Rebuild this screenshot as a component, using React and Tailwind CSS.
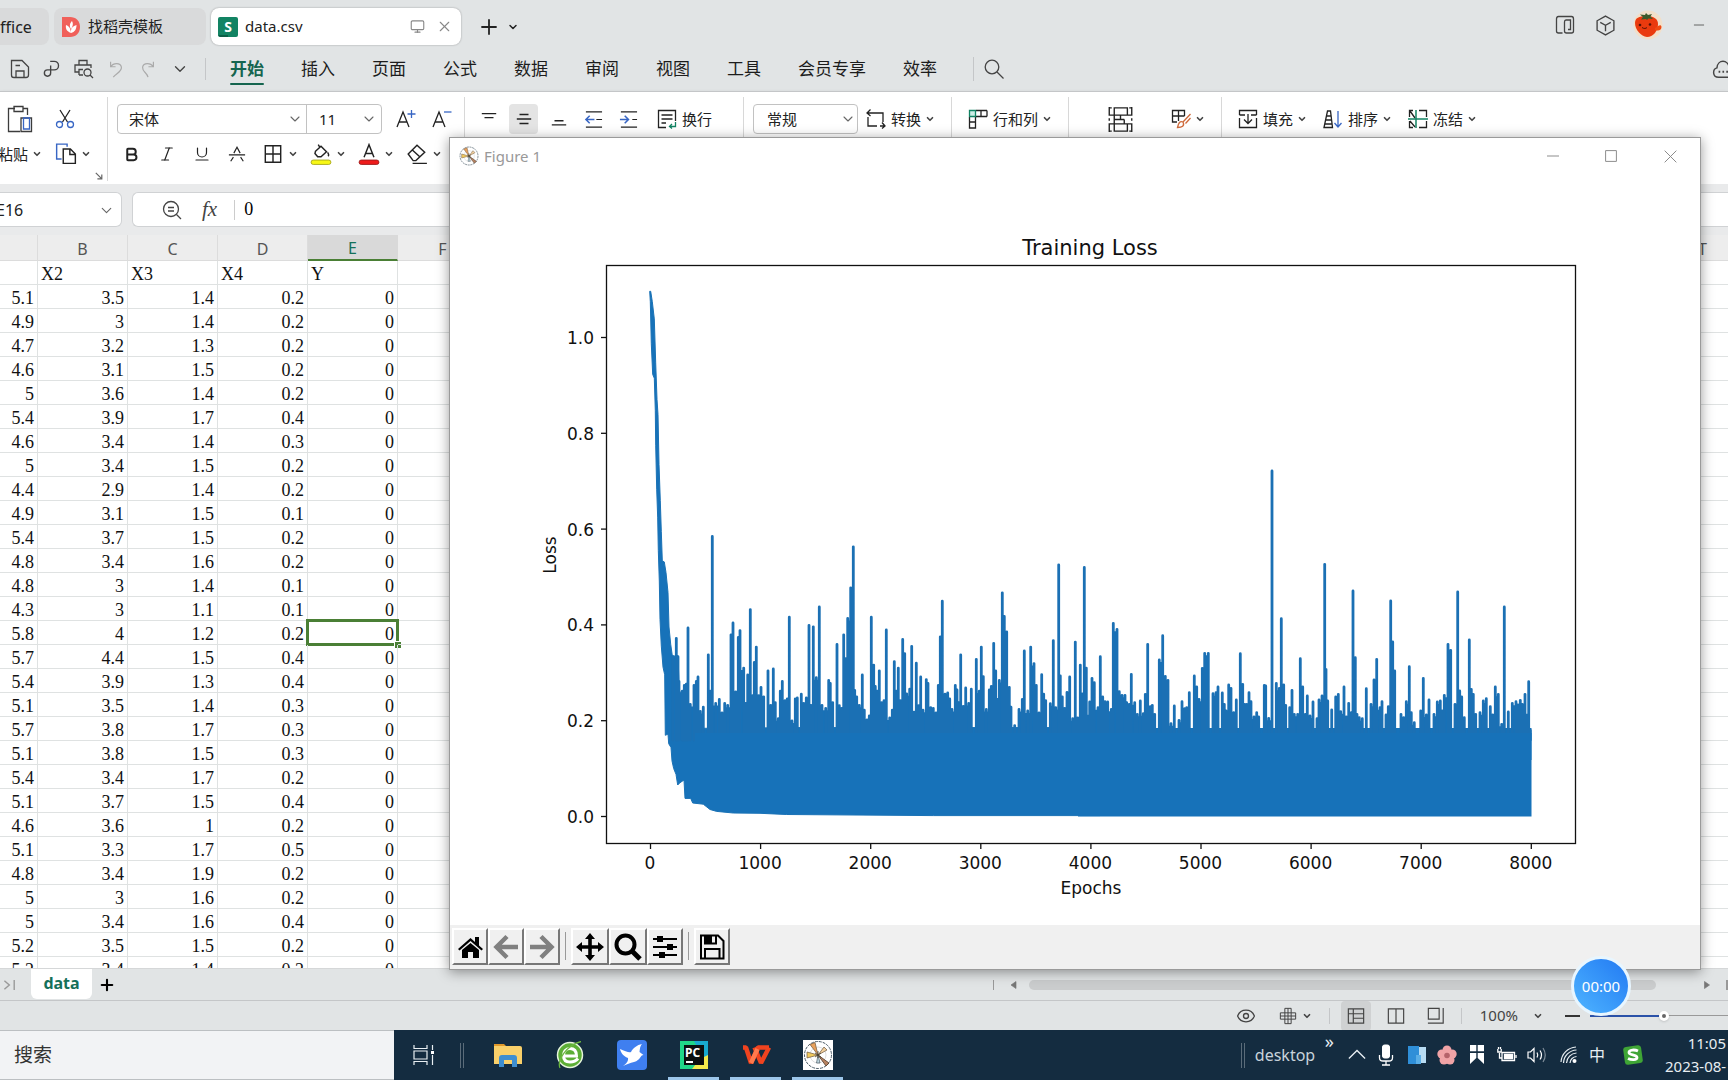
import { ChevronDown, Search, X, Plus, Minus, Monitor, Eye, Bold, Italic, Underline } from 'lucide-react';
import clsx from 'clsx';

const UI_FONT = "font-['Noto_Sans','Noto_Sans_CJK_SC',sans-serif]";

const columns = ['A', 'B', 'C', 'D', 'E', 'F', 'G', 'H', 'I', 'J', 'K', 'L', 'M', 'N', 'O', 'P', 'Q', 'R', 'S', 'T'];

const rows = [
  ['5.1', '3.5', '1.4', '0.2', '0'],
  ['4.9', '3', '1.4', '0.2', '0'],
  ['4.7', '3.2', '1.3', '0.2', '0'],
  ['4.6', '3.1', '1.5', '0.2', '0'],
  ['5', '3.6', '1.4', '0.2', '0'],
  ['5.4', '3.9', '1.7', '0.4', '0'],
  ['4.6', '3.4', '1.4', '0.3', '0'],
  ['5', '3.4', '1.5', '0.2', '0'],
  ['4.4', '2.9', '1.4', '0.2', '0'],
  ['4.9', '3.1', '1.5', '0.1', '0'],
  ['5.4', '3.7', '1.5', '0.2', '0'],
  ['4.8', '3.4', '1.6', '0.2', '0'],
  ['4.8', '3', '1.4', '0.1', '0'],
  ['4.3', '3', '1.1', '0.1', '0'],
  ['5.8', '4', '1.2', '0.2', '0'],
  ['5.7', '4.4', '1.5', '0.4', '0'],
  ['5.4', '3.9', '1.3', '0.4', '0'],
  ['5.1', '3.5', '1.4', '0.3', '0'],
  ['5.7', '3.8', '1.7', '0.3', '0'],
  ['5.1', '3.8', '1.5', '0.3', '0'],
  ['5.4', '3.4', '1.7', '0.2', '0'],
  ['5.1', '3.7', '1.5', '0.4', '0'],
  ['4.6', '3.6', '1', '0.2', '0'],
  ['5.1', '3.3', '1.7', '0.5', '0'],
  ['4.8', '3.4', '1.9', '0.2', '0'],
  ['5', '3', '1.6', '0.2', '0'],
  ['5', '3.4', '1.6', '0.4', '0'],
  ['5.2', '3.5', '1.5', '0.2', '0'],
  ['5.2', '3.4', '1.4', '0.2', '0'],
];

// Loss peaks, x and y in thirds of a pixel. First half of the run.
const earlyPeaks = '218,1060 229,1012 234,1060 237,1125 247,1150 253,1135 259,1132 264,985 271,1185 282,1135 289,1125 294,1113 301,1203 310,1192 325,1055 331,1150 337,746 347,1182 358,1172 366,1207 374,1182 383,1187 393,1003 399,972 407,1152 415,1010 420,992 431,1090 437,1182 443,1108 451,937 458,1162 463,1075 469,1035 476,1162 483,1140 491,1165 504,1097 512,1187 520,1092 526,1180 535,1222 541,1150 547,1125 555,1175 562,1170 568,957 576,1228 586,1170 592,1168 604,1158 611,1182 619,1168 627,978 633,1187 640,982 649,1115 658,930 666,1187 677,1195 686,1122 691,1130 698,1180 711,1028 718,1188 725,1195 731,1003 737,1065 743,960 752,880 760,773 764,1148 770,1165 778,1187 787,1108 793,1200 801,1225 808,1215 814,957 821,1082 826,1138 832,1150 838,1097 845,1180 852,1175 859,990 869,1220 877,1200 883,1073 889,1150 895,1090 901,1175 908,1015 914,1052 920,1157 929,1145 935,1033 942,1205 949,1077 956,1188 962,1113 969,1200 979,1120 984,1130 992,1193 1000,1195 1008,1207 1015,1135 1021,1008 1027,915 1035,1158 1043,1155 1049,1170 1056,1198 1066,1135 1071,1147 1076,1180 1082,1055 1090,1190 1097,1142 1106,1182 1114,1145 1129,1067 1138,1150 1144,1035 1150,1112 1159,1198 1168,1147 1174,1138 1181,1025 1187,1097 1192,1172 1198,1122 1207,893 1213,955 1220,995 1228,1140 1233,1192 1244,1240 1257,1198 1267,1172 1273,1045 1283,1202 1292,1035 1302,1078 1309,1135 1317,1207 1325,1107 1331,1158 1337,1175 1351,1183 1360,1018 1367,1193 1376,820 1381,1110 1387,1165 1394,1195 1401,1153 1409,1113 1418,1222 1426,1022 1433,1220 1441,1082 1447,1157 1453,827 1459,1090';

// Second half of the run.
const latePeaks = '22,825 29,783 36,712 43,725 54,800 61,647 68,768 75,782 83,783 94,805 100,547 111,565 118,752 126,763 135,763 140,785 148,790 154,700 164,785 172,820 181,780 190,818 196,760 203,610 211,797 217,793 224,820 238,657 248,584 256,706 264,718 273,848 283,795 297,838 306,782 314,803 320,800 328,755 343,705 350,738 357,775 367,682 374,637 385,637 399,758 408,755 414,738 427,756 433,790 438,810 446,732 453,742 461,815 469,777 481,638 488,730 494,790 500,790 507,755 513,782 522,828 530,815 536,828 553,733 557,735 566,832 576,90 589,727 598,742 604,533 611,732 617,793 629,800 636,748 643,820 653,820 661,653 668,738 676,820 682,765 690,825 699,783 711,833 717,777 726,765 734,370 738,685 743,780 755,807 767,768 775,760 782,812 792,738 799,828 806,787 814,815 819,450 826,650 831,820 838,830 847,833 859,743 873,790 882,717 890,655 900,800 906,782 918,822 925,797 932,480 938,603 944,690 963,820 971,830 979,782 988,677 994,815 1003,845 1022,810 1030,712 1039,822 1047,777 1062,820 1072,783 1081,780 1087,810 1093,763 1104,610 1112,628 1125,790 1133,453 1139,750 1145,768 1153,830 1168,597 1174,745 1180,760 1187,820 1200,815 1210,780 1219,773 1231,797 1238,822 1246,738 1255,760 1265,850 1273,498 1285,813 1297,787 1308,782 1314,792 1321,778 1327,790 1335,760 1342,822 1346,722 1351,868';

const parse = (text) => text.split(' ').map((pair) => pair.split(',').map(Number));

const peaks = [
  ...parse(earlyPeaks).map(([x, y]) => [600 + x / 3, 250 + y / 2.613]),
  ...parse(latePeaks).map(([x, y]) => [1080 + x / 3, 440 + y / 3]),
];

// The sharp drop at the start and the solid band under the peaks
const descent = [
  [149, 108], [152, 108], [157, 135], [163, 180], [167, 295], [171, 390], [174, 430], [177, 560], [181, 655], [184, 735],
  [187, 812], [193, 815], [198, 843], [204, 895], [207, 985], [212, 1030], [217, 1060], [234, 1062], [238, 1150], [260, 1195],
  [275, 1250], [600, 1248], [1500, 1248], [1500, 1478], [1000, 1478], [560, 1475], [480, 1472], [400, 1471], [350, 1467],
  [330, 1462], [310, 1448], [278, 1445], [272, 1433], [255, 1433], [252, 1385], [240, 1392], [233, 1398], [228, 1370],
  [221, 1355], [216, 1335], [213, 1300], [206, 1290], [204, 1265], [196, 1268], [194, 1110], [189, 1090], [184, 1035],
  [180, 965], [178, 865], [175, 785], [173, 700], [170, 625], [167, 510], [166, 420], [163, 335], [158, 325], [154, 245],
  [151, 135],
].map(([x, y]) => `${(600 + x / 3).toFixed(1)},${(250 + y / 2.613).toFixed(1)}`).join(' ');

const peakPath = peaks.map(([x, y]) => `M${x.toFixed(1)} ${(y + 1).toFixed(1)}V740`).join('');

// Neighbouring peaks run together up to the lower one
const joinPath = peaks.slice(1).map(([x, y], i) => {
  const [px, py] = peaks[i];
  if (x - px > 3.8) return '';
  const top = Math.max(y, py) + 3;
  return `M${px.toFixed(1)} ${top.toFixed(1)}H${x.toFixed(1)}V740H${px.toFixed(1)}Z`;
}).join('');

function Icon({ size = 20, children, className }) {
  return (
    <svg width={size} height={size} viewBox="0 0 20 20" fill="none" stroke="currentColor" strokeWidth="1.3" className={clsx('shrink-0', className)} aria-hidden="true">
      {children}
    </svg>
  );
}

function Caret() {
  return <ChevronDown size={10} strokeWidth={4} className="shrink-0 text-[#444]" />;
}

function Tool({ label, className, children }) {
  return (
    <button type="button" aria-label={label} className={clsx('flex h-[30px] shrink-0 items-center justify-center rounded', className)}>
      {children}
    </button>
  );
}

function TextTool({ text, caret = true, children }) {
  return (
    <button type="button" className="flex h-[30px] shrink-0 items-center whitespace-nowrap">
      {children}
      <span className="ml-[5px]">{text}</span>
      {caret && <span className="ml-1"><Caret /></span>}
    </button>
  );
}

function MplLogo({ size }) {
  return (
    <svg width={size} height={size} viewBox="0 0 30 30" fill="none" aria-hidden="true">
      <circle cx="15" cy="15" r="13.5" fill="#fff" stroke="#4a5a66" strokeWidth="1" strokeDasharray="3 1" />
      <circle cx="15" cy="15" r="8" stroke="#c9c9c9" strokeWidth="0.6" />
      <path d="M15 15L7 4.500L12 2.500Z" fill="#e8a15c" stroke="#6b543c" strokeWidth="0.7" />
      <path d="M15 15L4 12V18Z" fill="#f0c95e" stroke="#6b543c" strokeWidth="0.7" />
      <path d="M15 15L21 7L24 10Z" fill="#f1cf9c" stroke="#6b543c" strokeWidth="0.7" />
      <path d="M15 15L26 23L23 26Z" fill="#b98360" stroke="#4d3929" strokeWidth="0.8" />
      <path d="M15 15L13.500 23H17Z" fill="#bfd8e0" stroke="#4a5a66" strokeWidth="0.7" />
      <path d="M12 13L18 17M15 11V18M12 17L18 13" stroke="#463c2c" strokeWidth="0.8" />
    </svg>
  );
}

function TitleTabs() {
  return (
    <header className="flex h-12 shrink-0 items-center text-[15px] text-[#222]">
      <button type="button" className="mt-[5px] h-[37px] w-[49px] shrink-0 rounded-r-lg bg-[#d9dadb] text-left text-[16px]">ffice</button>
      <button type="button" className="mt-[5px] ml-[5px] flex h-[37px] w-[152px] shrink-0 items-center rounded-lg bg-[#d9dadb] pl-2">
        <svg width="18" height="20" viewBox="0 0 18 20" aria-hidden="true">
          <path d="M0 0H8C14 0 18 4 18 10S14 20 8 20H0Z" fill="#f0605a" />
          <path d="M9 16C4 14 3.500 11 4 8C7 9 8.500 11 9 16ZM9 16C8.500 11 11 9 14.500 8C14.500 12 13 15 9 16ZM9 12C7 9 8 6 10 4C11.500 7 11 9 9 12Z" fill="#fff" />
        </svg>
        <span className="ml-2">找稻壳模板</span>
      </button>
      <div className="mt-[5px] ml-[5px] flex h-[37px] w-[250px] shrink-0 items-center rounded-lg bg-white pr-2 pl-[7px] shadow-[0_0_2px_rgba(0,0,0,0.35)]">
        <svg width="20" height="20" viewBox="0 0 20 20" aria-hidden="true">
          <rect width="20" height="20" rx="2" fill="#128363" />
          <path d="M0 18h10v2H2z" fill="#0b5f47" />
          <text x="10" y="15" textAnchor="middle" fill="#fff" fontSize="14" fontWeight="700" fontFamily="Noto Sans">S</text>
        </svg>
        <span className="ml-[7px] flex-1">data.csv</span>
        <Monitor size={15} strokeWidth={1.8} className="mr-[11px] text-[#888]" />
        <button type="button" aria-label="关闭"><X size={17} strokeWidth={1.6} className="text-[#888]" /></button>
      </div>
      <button type="button" aria-label="新建" className="mt-[5px] ml-4"><Plus size={24} strokeWidth={1.8} /></button>
      <button type="button" aria-label="更多" className="mt-[5px] ml-[6px]"><ChevronDown size={12} strokeWidth={3} /></button>
      <div className="mt-[2px] ml-auto flex items-center text-[#444]">
        <Icon size={20} className="mr-5">
          <path d="M7.500 18H3.500C2 18 1.500 17.500 1.500 16V4C1.500 2.500 2 1.500 3.500 1.500H16.500C18 1.500 18.500 2.500 18.500 4V16C18.500 17.500 18 18 16.500 18H11.500C10 18 9.500 17.500 9.500 16V7C9.500 5.500 10 5 11 5H15.500V14.500H13" />
        </Icon>
        <Icon size={21} className="mr-[17px]">
          <path d="M10 1L18 5.500V14.500L10 19L2 14.500V5.500ZM5 7L10 9.800L15 7M10 10V15.500" />
        </Icon>
        <svg width="30" height="30" viewBox="0 0 30 30" aria-hidden="true">
          <circle cx="15" cy="15" r="14.500" fill="#f2dfc9" />
          <path d="M2 13C2 8 6 6 13 6C21 6 25 9 25 14C25 21 20 27 14 27C8 26 2 20 2 13Z" fill="#ea3a0e" />
          <path d="M22 18C26 15 28 14 28.500 17C28 21 25 21 22 20Z" fill="#f04a12" />
          <path d="M13 9L8 9.500L10 7L7 4.500L12 5L13 3L15 5L19 4L17.500 6.500L20 9L15.500 8.500L14 10Z" fill="#3c5a2a" />
          <circle cx="7" cy="15" r="1.300" fill="#571204" />
          <circle cx="17" cy="14.500" r="1.300" fill="#571204" />
          <path d="M9 17.500C11 19 13 18.500 14 17.500" stroke="#571204" fill="none" />
        </svg>
        <button type="button" aria-label="最小化" className="mr-[21px] ml-7"><Minus size={16} strokeWidth={1.2} /></button>
      </div>
    </header>
  );
}

function MenuBar() {
  const tabs = ['插入', '页面', '公式', '数据', '审阅', '视图', '工具', '会员专享', '效率'];
  return (
    <nav className="flex h-[43px] shrink-0 items-center overflow-hidden pb-[2px] text-[17px] text-[#1c1c1c]">
      <div className="flex pl-1 text-[#444]">
        <Tool label="保存" className="w-8">
          <Icon><path d="M1.500 1.500H12L18.500 8V16C18.500 18 18 18.500 16 18.500H4C2 18.500 1.500 18 1.500 16ZM6 18V12H14V18M5.500 6.500H10" /></Icon>
        </Tool>
        <Tool label="输出为PDF" className="w-8">
          <Icon size={18}><path d="M8 1.500H12.500A4.500 4.500 0 0 1 12.500 11H5A3.500 3.500 0 1 0 8.500 14.500V6" strokeWidth="1.500" /></Icon>
        </Tool>
        <Tool label="打印预览" className="w-8">
          <Icon><path d="M5 6V1.500H13V6M5 13H1V6H17V9M5 16V10.500H9M5 16H9" /><circle cx="13.500" cy="13.500" r="3.500" /><path d="M16 16L19 19" /></Icon>
        </Tool>
        <Tool label="撤销" className="w-8 text-[#aaa]">
          <Icon size={18}><path d="M4 2V7.500H9.500M4 7.500C7 3 15 2.500 16 8C16.500 13 10 15 7 19" /></Icon>
        </Tool>
        <Tool label="恢复" className="w-8 text-[#aaa]">
          <Icon size={18}><path d="M16 2V7.500H10.500M16 7.500C13 3 5 2.500 4 8C3.500 13 9 14 10 19" /></Icon>
        </Tool>
        <Tool label="自定义" className="w-8"><ChevronDown size={18} strokeWidth={1.8} /></Tool>
      </div>
      <span className="mr-6 ml-[9px] h-[22px] w-px shrink-0 bg-[#c4c6c8]" />
      <div className="flex shrink-0 items-center gap-[37px]">
        <a href="#home" className="relative font-bold text-[#15654f]">
          开始
          <span className="absolute right-0 -bottom-[4px] left-0 h-[2px] rounded bg-[#15654f]" />
        </a>
        {tabs.map((name) => <a key={name} href="#tab">{name}</a>)}
      </div>
      <span className="mr-[10px] ml-9 h-6 w-px shrink-0 bg-[#c4c6c8]" />
      <Icon size={20} className="text-[#444]"><circle cx="8" cy="8" r="6.800" /><path d="M13 13L19.500 19.500" /></Icon>
      <Icon size={22} className="-mr-[6px] ml-auto text-[#444]">
        <path d="M6 17.500C0 17.500 .5 10 4.500 9C5 1 15 1 15.500 9C19.500 10 19.500 17.500 14 17.500Z" />
        <path d="M6 12.500H7.500M9.500 12.500H11M13 12.500H14.500" strokeWidth="2" />
      </Icon>
    </nav>
  );
}

function Ribbon() {
  const group = 'shrink-0 border-r border-[#d8d8d8]';
  return (
    <section className="flex h-[93px] shrink-0 overflow-hidden border-t border-[#c4c6c8] bg-white pt-[5px] pb-[3px] text-[15px] text-[#222] shadow-[0_2px_4px_rgba(0,0,0,0.18)]">
      <div className={clsx(group, 'relative w-[108px] pt-[7px]')}>
        <div className="flex">
          <Tool label="粘贴板" className="w-10">
            <svg width="26" height="28" viewBox="0 0 26 28" fill="none" stroke="#3c3c3c" strokeWidth="1.3" aria-hidden="true">
              <path d="M8 3.500H1.500V26.500H13M16 3.500H20.500V10M7 1.500H16V6.500H7Z" />
              <path d="M14 13V26.500H24.500V13Z" />
              <path d="M16.500 13H22.500V24H16.500Z" stroke="#3866c4" />
            </svg>
          </Tool>
          <Tool label="剪切" className="w-[50px]">
            <Icon><path d="M5 1L12.500 13M15 1L7.500 13" /><circle cx="4.500" cy="15.500" r="3" stroke="#3866c4" /><circle cx="15.500" cy="15.500" r="3" stroke="#3866c4" /></Icon>
          </Tool>
        </div>
        <div className="mt-[5px] flex h-[30px] items-center">
          <button type="button" className="-ml-[2px] flex items-center gap-1 whitespace-nowrap">粘贴<Caret /></button>
          <button type="button" aria-label="复制" className="ml-[13px] flex items-center gap-1">
            <Icon size={22}><path d="M6 14.500H1.500V1H11V3.500" stroke="#3866c4" /><path d="M7.500 5.500H14L18.500 10V18.500H7.500ZM13.500 5.500V10.500H18.500" /></Icon>
            <Caret />
          </button>
        </div>
        <Icon size={8} className="absolute right-1 bottom-[1px] text-[#666]"><path d="M2 2L17 17M17 6V17H6" strokeWidth="3" /></Icon>
      </div>

      <div className={clsx(group, 'w-[357px] pt-[7px]')}>
        <div className="flex pl-[9px]">
          <div className="relative flex h-[30px] w-[265px] rounded border border-[#c2c2c2]">
            <select aria-label="字体" className="w-[189px] appearance-none border-r border-[#c2c2c2] bg-transparent pl-[11px] outline-none"><option>宋体</option></select>
            <select aria-label="字号" className="flex-1 appearance-none bg-transparent pl-3 outline-none"><option>11</option></select>
            <ChevronDown size={16} strokeWidth={1.6} className="pointer-events-none absolute top-[6px] left-[169px] text-[#666]" />
            <ChevronDown size={16} strokeWidth={1.6} className="pointer-events-none absolute top-[6px] right-1 text-[#666]" />
          </div>
          <Tool label="增大字号" className="ml-[6px] w-9"><Icon><path d="M1 18L7 3L13 18M3.500 13H11" /><path d="M15.500 1V9M11.500 5H19.500" stroke="#3866c4" /></Icon></Tool>
          <Tool label="减小字号" className="w-9"><Icon><path d="M1 18L7 3L13 18M3.500 13H11" /><path d="M12 3H19.500" stroke="#3866c4" /></Icon></Tool>
        </div>
        <div className="mt-[5px] flex pl-[6px]">
          <Tool label="加粗" className="w-[35px]"><Bold size={17} strokeWidth={2.8} /></Tool>
          <Tool label="倾斜" className="w-[35px]"><Italic size={18} strokeWidth={1.6} /></Tool>
          <Tool label="下划线" className="w-[35px]"><Underline size={18} strokeWidth={1.6} /></Tool>
          <Tool label="删除线" className="w-[35px]"><Icon size={18}><path d="M1 11H19M3 18L6 13.500M17 18L14 13.500M6.500 9L10 2.500L13.500 9" /></Icon></Tool>
          <Tool label="边框" className="ml-2 w-12 justify-start! gap-1"><Icon size={22}><path d="M3 2.500H17V17.500H3ZM10 2.500V17.500M3 10H17" /></Icon><Caret /></Tool>
          <Tool label="填充颜色" className="w-12 justify-start! gap-1">
            <Icon size={22}><path d="M5 7.500L10 3L15 8L10 12.500H7L4.500 9.500ZM9 4L7.500 1.500M16 8.500C17 10 17.500 11 16.500 12" /><rect x="1" y="15.500" width="18" height="4" rx="2" fill="#f7f716" stroke="#a5a51a" strokeWidth="0.8" /></Icon><Caret />
          </Tool>
          <Tool label="字体颜色" className="w-12 justify-start! gap-1">
            <Icon size={22}><path d="M5.500 13L10 1.500L14.500 13M7 9.500H13" /><rect x="1" y="15.500" width="18" height="4" rx="2" fill="#ee1c1c" stroke="#9c1d1d" strokeWidth="0.8" /></Icon><Caret />
          </Tool>
          <Tool label="清除" className="w-12 justify-start! gap-1"><Icon size={22}><path d="M2 10L10 2L17 8.500L9 16H6.500ZM6 6.500L13 13M6 18.500H19" /></Icon><Caret /></Tool>
        </div>
      </div>

      <div className={clsx(group, 'w-[279px] pt-[7px]')}>
        <div className="flex pl-[6px]">
          <Tool label="顶端对齐" className="w-[35px]"><Icon size={18}><path d="M2 4H18M5 8.500H15" strokeWidth="1.600" /></Icon></Tool>
          <Tool label="垂直居中" className="mx-[3px] w-[29px] bg-[#e4e4e4]"><Icon size={18}><path d="M2 10H18M5 5H15M5 15H15" strokeWidth="1.600" /></Icon></Tool>
          <Tool label="底端对齐" className="w-[35px]"><Icon size={18}><path d="M5 12H15M2 16.500H18" strokeWidth="1.600" /></Icon></Tool>
          <Tool label="减少缩进" className="w-[35px]"><Icon size={19}><path d="M2 2H19M2 18H19M13 10H19" /><path d="M11 10H2M6 6L2 10L6 14" stroke="#3866c4" strokeWidth="1.600" /></Icon></Tool>
          <Tool label="增加缩进" className="w-[35px]"><Icon size={19}><path d="M2 2H19M2 18H19M14 10H19" /><path d="M1 10H10M6 6L10 10L6 14" stroke="#3866c4" strokeWidth="1.600" /></Icon></Tool>
          <span className="w-[11px]" />
          <TextTool text="换行" caret={false}>
            <Icon><path d="M9 18.500H1.500V1.500H18.500V12M4.500 6H15.500M4.500 10H15.500M4.500 14H9" /><path d="M18.500 13V17.500H12.500M15 15L12.500 17.500L15 19.500" stroke="#128363" /></Icon>
          </TextTool>
        </div>
      </div>

      <div className={clsx(group, 'flex w-[208px] pt-[7px]')}>
        <div className="relative mr-2 ml-[9px] h-[30px] w-[105px]">
          <select aria-label="数字格式" className="h-full w-full appearance-none rounded border border-[#c2c2c2] bg-transparent pl-[13px] outline-none"><option>常规</option></select>
          <ChevronDown size={16} strokeWidth={1.6} className="pointer-events-none absolute top-[7px] right-[2px] text-[#666]" />
        </div>
        <TextTool text="转换"><Icon><path d="M2 8V17H11M1 4H17V13M4.500 .5L1 4L4.500 7M14 17H19M16 13.500L19 17L16 19.500" /></Icon></TextTool>
      </div>

      <div className={clsx(group, 'w-[117px] pt-[7px] pl-4')}>
        <TextTool text="行和列"><Icon><path d="M8 1.500H19M8 7.500H19M13 1.500V7.500M19 1.500V7.500M1.500 8V19H7.500V8M1.500 13H7.500" /><path d="M1.500 1.500H7.500V7.500H1.500Z" stroke="#128363" fill="#cdeee6" /></Icon></TextTool>
      </div>

      <div className={clsx(group, 'flex w-[153px] pt-[7px] pl-[39px]')}>
        <Tool label="合并居中" className="w-6"><Icon size={25}><path d="M1 0V7M1 9V11M1 13V20M19 0V7M19 9V11M19 13V20M1 .7H3M17 .7H19M1 19.300H3M17 19.300H19M5 .7H15.500V6.500H5ZM5 13.500H15.500V19.300H5ZM1 6.500H19M1 13.500H19M5 6.500V13.500M10 6.500V10M13 10V13.500M5 10H13" strokeWidth="1.100" /></Icon></Tool>
        <Tool label="表格样式" className="ml-[39px] gap-1"><Icon><path d="M6 13H1.500V1.500H13.500V7M1.500 7H13.500M7.500 1.500V12" /><path d="M19.500 5L12 13M12 13C9 11.500 7.500 14 6.500 18.500C11 18.500 14 17 12 13ZM14.500 14.500L19.500 9" stroke="#cf6a3b" /></Icon><Caret /></Tool>
      </div>

      <div className="flex shrink-0 gap-4 pt-[7px] pl-4">
        <TextTool text="填充"><Icon><path d="M1.500 6V1.500H18.500V6M1.500 9V18.500H18.500V9M1.500 6H7M13 6H18.500M10 5V14M6 10.500L10 14.500L14 10.500" /></Icon></TextTool>
        <TextTool text="排序"><Icon><path d="M1 18.500L4.500 2H7.500L9.500 18.500ZM4 7H8M3 11H8.500M2 15H9" /><path d="M15 2V18M11.500 14L15 18L18.500 14" stroke="#3866c4" /></Icon></TextTool>
        <TextTool text="冻结"><Icon><path d="M5 1.500H1.500V8M11 1.500H18.500V8M18.500 12V18.500H11M1.500 12V18.500H5M2 2L7 9M2 12L7 18" /><path d="M8 1V19M0 10H20" stroke="#128363" strokeWidth="1.500" /></Icon></TextTool>
      </div>
    </section>
  );
}

function FormulaBar() {
  return (
    <div className="flex h-[51px] shrink-0 bg-[#e9eaeb] pt-2 pb-2">
      <div className="relative h-[35px] w-[122px] shrink-0 overflow-hidden rounded-r-md border border-l-0 border-[#d0d2d4] bg-white">
        <input aria-label="名称框" defaultValue="E16" className="-ml-1 h-full w-[90px] bg-transparent text-[16px] text-[#222] outline-none" />
        <ChevronDown size={17} strokeWidth={1.6} className="absolute top-[9px] right-[6px] text-[#666]" />
      </div>
      <div className="ml-[10px] flex h-[35px] flex-1 items-center rounded-l-md border border-r-0 border-[#d0d2d4] bg-white text-[#444]">
        <Icon size={20} className="ml-[29px]"><circle cx="9" cy="9" r="7.500" /><path d="M14.500 14.500L19 19M6 7.500H12M6 11H12" /></Icon>
        <span className="ml-5 font-['Liberation_Serif',serif] text-[21px] italic">fx</span>
        <span className="ml-[17px] h-5 w-px bg-[#ccc]" />
        <input aria-label="编辑栏" defaultValue="0" className="ml-[9px] w-40 bg-transparent font-['Liberation_Serif',serif] text-[18px] text-black outline-none" />
      </div>
    </div>
  );
}

function Sheet() {
  return (
    <div className="min-h-0 flex-1 overflow-hidden bg-white">
      <table className="w-[1748px] table-fixed border-separate border-spacing-0">
        <colgroup>
          {columns.map((c) => <col key={c} className={c === 'A' ? 'w-[38px]' : 'w-[90px]'} />)}
        </colgroup>
        <thead>
          <tr className="h-[26px] text-[16px] text-[#555]">
            {columns.map((c) => (
              <th
                key={c}
                scope="col"
                aria-label={c}
                className={clsx('border-r p-0 pt-[2px] leading-[22px] font-normal', c === 'E'
                  ? 'border-b-2 border-r-[#d9d9d9] border-b-[#4a7f35] bg-[#d9d9d9] text-[#15705a]'
                  : 'border-b border-[#dcdcdc] bg-[#ededed]')}
              >
                {'BCDEFT'.includes(c) ? c : ''}
              </th>
            ))}
          </tr>
        </thead>
        <tbody className="font-['Liberation_Serif','Noto_Sans_CJK_SC',serif] text-[18px] text-[#111]">
          <tr className="h-6">
            {columns.map((c, i) => (
              <td key={c} className="h-6 border-r border-b border-[#dfe2e2] p-0 pt-1 pl-[3px] leading-[19px]">{['', 'X2', 'X3', 'X4', 'Y'][i]}</td>
            ))}
          </tr>
          {rows.map((row, r) => (
            <tr key={r} className="h-6">
              {columns.map((c, i) => (
                <td key={c} className="relative h-6 border-r border-b border-[#dfe2e2] p-0 pt-1 pr-[3px] text-right leading-[19px]">
                  {row[i]}
                  {r === 14 && c === 'E' && (
                    <span className="absolute -top-[2px] -right-[2px] -bottom-[2px] -left-[2px] border-[3px] border-[#4a7f35]">
                      <span className="absolute -right-[5px] -bottom-[5px] size-[7px] border-t border-l border-white bg-[#4a7f35]" />
                    </span>
                  )}
                </td>
              ))}
            </tr>
          ))}
        </tbody>
      </table>
    </div>
  );
}

function SheetTabs() {
  return (
    <div className="flex h-8 shrink-0 items-center border-t border-[#d5d7d8]">
      <Icon size={14} className="ml-[3px] text-[#999]"><path d="M2 4L9 10L2 16M16 3V17" strokeWidth="2" /></Icon>
      <button type="button" className="mb-[2px] ml-[14px] h-[30px] w-[61px] rounded-b-md bg-white pb-[2px] text-[16px] font-bold text-[#15705a]">data</button>
      <button type="button" aria-label="新建工作表" className="ml-[6px]"><Plus size={18} strokeWidth={2.8} /></button>
      <div className="ml-auto flex w-[735px] shrink-0 items-center text-[#777]">
        <span className="h-[10px] w-px bg-[#999]" />
        <Icon size={10} className="ml-[15px]"><path d="M14 3V17L4 10Z" fill="currentColor" /></Icon>
        <span className="ml-[10px] h-[10px] w-[628px] rounded-full bg-[#cacccd]" />
        <Icon size={10} className="ml-[46px]"><path d="M5 3V17L15 10Z" fill="currentColor" /></Icon>
        <span className="ml-[14px] h-[10px] w-[2px] bg-[#999]" />
      </div>
    </div>
  );
}

function StatusBar() {
  return (
    <div className="flex h-[30px] shrink-0 items-center justify-end border-t border-[#c4c6c8] text-[15px] text-[#444]">
      <Eye size={20} strokeWidth={1.6} />
      <Icon size={18} className="ml-[23px]"><path d="M6.500 1.500H13.500V18.500H6.500ZM1.500 6.500H18.500V13.500H1.500ZM10 1.500V18.500M1.500 10H18.500" strokeWidth="1.100" /></Icon>
      <span className="ml-[5px]"><Caret /></span>
      <span className="ml-[17px] h-4 w-px bg-[#c4c6c8]" />
      <Tool label="普通视图" className="ml-[11px] w-[30px] bg-[#cfd1d2]"><Icon size={18}><path d="M1.500 2H18.500V18H1.500ZM1.500 7.500H18.500M7 2V18M7 12.500H18.500" strokeWidth="1.300" /></Icon></Tool>
      <Tool label="分页预览" className="ml-[10px] w-[30px]"><Icon size={18}><path d="M1.500 2H18.500V18H1.500ZM10 2V18" /></Icon></Tool>
      <Tool label="阅读模式" className="ml-[10px] w-[30px]"><Icon size={18}><path d="M1.500 1.500H13.500V13.500H1.500ZM18 1V18H1" /></Icon></Tool>
      <span className="ml-[10px] h-4 w-px bg-[#c4c6c8]" />
      <span className="ml-[18px]">100%</span>
      <span className="ml-[15px]"><Caret /></span>
      <span className="ml-[22px] h-[2px] w-[15px] bg-[#333]" />
      <div className="relative ml-[10px] flex h-4 w-[138px] shrink-0 items-center">
        <span className="h-[2px] w-[74px] bg-[#2b52a8]" />
        <span className="h-px flex-1 bg-[#999]" />
        <span className="absolute left-[69px] size-[10px] rounded-full border-[3px] border-white bg-[#666] shadow" />
      </div>
    </div>
  );
}

function LossChart() {
  return (
    <svg viewBox="450 174 1250 751" className="block w-full font-['DejaVu_Sans',sans-serif]" role="img" aria-label="Training Loss">
      <rect x="606.500" y="265.500" width="969" height="578" fill="#fff" stroke="#111" strokeWidth="1.300" />
      <g fill="#1772b9">
        <polygon points={descent} stroke="#1a72b6" strokeWidth="1" strokeLinejoin="round" />
        <path d="M1078 728H1531.500V816.500H1078Z" />
        <path d={joinPath} />
        <path d={peakPath} stroke="#1b70b4" strokeWidth="2.800" strokeLinecap="round" />
        <path d="M695 733H1531.500V760H695Z" />
      </g>
      <g fill="#111" fontSize="17" textAnchor="middle">
        {[0, 1, 2, 3, 4, 5, 6, 7, 8].map((n) => (
          <g key={n}>
            <path d={`M${650.5 + n * 110.1} 844V849`} stroke="#111" strokeWidth="1.300" />
            <text x={650 + n * 110.1} y="869">{n * 1000}</text>
          </g>
        ))}
        {[0, 1, 2, 3, 4, 5].map((n) => (
          <g key={n}>
            <path d={`M601 ${816.5 - n * 95.8}H606`} stroke="#111" strokeWidth="1.300" />
            <text x="594" y={823 - n * 95.8} textAnchor="end">{(n * 0.2).toFixed(1)}</text>
          </g>
        ))}
        <text x="1091" y="894">Epochs</text>
        <text transform="translate(556 555) rotate(-90)">Loss</text>
        <text x="1090" y="255" fontSize="21">Training Loss</text>
      </g>
    </svg>
  );
}

function FigureWindow() {
  const key = 'flex h-[37px] w-9 items-center justify-center border-2 border-t-white border-l-white border-r-[#777] border-b-[#777] bg-[#f0f0f0]';
  return (
    <section className="absolute top-[137px] right-[27px] left-[449px] border border-[#9a9a9a] bg-white shadow-[0_2px_12px_rgba(0,0,0,0.4)]">
      <div className="flex h-9 items-center pl-[9px] text-[15px] text-[#999]">
        <MplLogo size={20} />
        <span className="ml-[5px] flex-1">Figure 1</span>
        <div className="flex text-[#888]">
          <button type="button" aria-label="Minimize" className="flex w-[58px] justify-center"><Icon size={12}><path d="M0 10H20" strokeWidth="1.600" /></Icon></button>
          <button type="button" aria-label="Maximize" className="flex w-[58px] justify-center"><Icon size={12}><path d="M1 1H19V19H1Z" strokeWidth="1.600" /></Icon></button>
          <button type="button" aria-label="Close" className="flex w-[60px] justify-center"><Icon size={13}><path d="M1 1L19 19M19 1L1 19" strokeWidth="1.500" /></Icon></button>
        </div>
      </div>
      <LossChart />
      <div className="flex h-11 items-start bg-[#f0f0f0] pt-[3px] pl-[2px]">
        <button type="button" aria-label="Home" className={key}>
          <svg width="27" height="24" viewBox="0 0 27 24"><path d="M1 14L13.500 3L18 7V2H22V10.500L26 14L24.500 15.500L13.500 6L2.500 15.500ZM5 15L13.500 8L22 15V23H16V17H11V23H5Z" /></svg>
        </button>
        <button type="button" aria-label="Back" className={key}>
          <svg width="26" height="26" viewBox="0 0 26 26" fill="none" stroke="#808080" strokeWidth="4.500"><path d="M25 13H5M14 2.500L3.500 13L14 23.500" /></svg>
        </button>
        <button type="button" aria-label="Forward" className={key}>
          <svg width="26" height="26" viewBox="0 0 26 26" fill="none" stroke="#808080" strokeWidth="4.500"><path d="M1 13H21M12 2.500L22.500 13L12 23.500" /></svg>
        </button>
        <span className="mx-[5px] mt-1 h-7 w-px bg-[#999]" />
        <button type="button" aria-label="Pan" className={clsx(key, 'w-[38px]!')}>
          <svg width="28" height="28" viewBox="0 0 28 28"><path d="M14 0L19 6H15.800V12.200H22V9L28 14L22 19V15.800H15.800V22H19L14 28L9 22H12.200V15.800H6V19L0 14L6 9V12.200H12.200V6H9Z" /></svg>
        </button>
        <button type="button" aria-label="Zoom" className={clsx(key, 'w-[38px]!')}>
          <svg width="28" height="28" viewBox="0 0 28 28" fill="none" stroke="#000"><circle cx="11.500" cy="11.500" r="9" strokeWidth="4" /><path d="M18 18L26 26" strokeWidth="5" /></svg>
        </button>
        <button type="button" aria-label="Subplots" className={key}>
          <svg width="26" height="24" viewBox="0 0 26 24"><path d="M1 4H25M1 12H25M1 20H25" stroke="#000" strokeWidth="2" /><path d="M5 1H11V7H5ZM15 9H21V15H15ZM7 17H13V23H7Z" /></svg>
        </button>
        <span className="mx-[5px] mt-1 h-7 w-px bg-[#999]" />
        <button type="button" aria-label="Save" className={key}>
          <svg width="26" height="26" viewBox="0 0 26 26" fill="none" stroke="#000" strokeWidth="2"><path d="M2 1.500H19L24.500 7V24.500H2ZM6 24V15H20.500V24M6 2V9.500H17V2" /><path d="M7 2H12V9H7Z" fill="#000" /></svg>
        </button>
      </div>
    </section>
  );
}

function TaskApp({ label, active, children }) {
  return (
    <button type="button" aria-label={label} className={clsx('mr-[11px] flex h-full w-[51px] items-center justify-center border-b-[3px] pt-[3px]', active ? 'border-[#9cc6ea]' : 'border-transparent')}>
      {children}
    </button>
  );
}

function Taskbar() {
  return (
    <footer className="flex h-[50px] shrink-0 items-stretch overflow-hidden bg-[#142c40] text-[#e8eef2]">
      <div className="w-[394px] shrink-0 border-y border-[#bcbfc2] bg-[#f2f3f5] pl-[14px]">
        <input type="text" aria-label="搜索" placeholder="搜索" className="h-full w-full bg-transparent text-[19px] text-[#333] outline-none placeholder:text-[#333]" />
      </div>
      <button type="button" aria-label="任务视图" className="ml-[19px] w-[22px]">
        <svg width="22" height="20" viewBox="0 0 22 20" fill="none" stroke="#e8eef2" strokeWidth="1.200"><path d="M1 0V3.500H14V0M1 6H14V14H1ZM1 20V16.500H14V20M19.500 0V5M19.500 10V20" /><path d="M18 6H21V9H18Z" fill="#fff" stroke="none" /></svg>
      </button>
      <span className="mt-[13px] mr-[18px] ml-[25px] h-[25px] w-[4px] border-x border-[#5b6c7a]" />
      <TaskApp label="文件资源管理器">
        <svg width="28" height="24" viewBox="0 0 28 24"><path d="M0 1H10L13 4H0Z" fill="#e0992b" /><path d="M0 3H26Q28 3 28 5V21H0Z" fill="#f9d06a" /><path d="M5 24V15Q5 12 8 12H20Q23 12 23 15V24H18V17H10V24Z" fill="#3e8ed0" /></svg>
      </TaskApp>
      <TaskApp label="浏览器">
        <svg width="28" height="28" viewBox="0 0 28 28" fill="none"><circle cx="14" cy="14" r="12.500" fill="#5cae35" stroke="#e6f4dc" strokeWidth="1.500" /><path d="M7.500 15H20.500C20.500 9.500 17.500 7.500 14 7.500C9.500 7.500 7.500 11 7.500 14.500C7.500 19 10 21 14 21C17.500 21 20 20 22 17.500" stroke="#fff" strokeWidth="3" /><path d="M4 27C1 20 10 4 25 .5" stroke="#6cb83f" strokeWidth="1.300" /></svg>
      </TaskApp>
      <TaskApp label="飞鸟">
        <svg width="30" height="30" viewBox="0 0 30 30"><rect width="30" height="30" rx="4" fill="#3f7ff0" /><path d="M3 9C8 11 12 13 14 12C16 8 20 5 25 4C22.500 7 23 10 22.500 12L26.500 15C23 15 24 20 17 22C13 23 10 24 6 26C10 23 11.500 21 11 18C6 16 4 13 3 9Z" fill="#fff" /></svg>
      </TaskApp>
      <TaskApp label="PyCharm" active>
        <svg width="28" height="28" viewBox="0 0 28 28"><rect width="28" height="28" fill="#21d789" /><path d="M14 0H28V20L18 8Z" fill="#18a9d0" /><path d="M20 18L28 14V28H12Z" fill="#f5e94b" /><rect x="4" y="4" width="20" height="20" fill="#0c0f10" /><text x="5" y="16" fill="#fff" fontSize="12" fontWeight="700" fontFamily="Noto Sans">PC</text><path d="M6 20H13V22H6Z" fill="#fff" /></svg>
      </TaskApp>
      <TaskApp label="WPS" active>
        <svg width="30" height="21" viewBox="0 0 30 21" fill="none" strokeWidth="4.500"><path d="M28 2.500L20 18L13.500 2.500" stroke="#f0431f" strokeLinejoin="bevel" /><path d="M2 2.500H5L10 18L17 2.500H28" stroke="#f0431f" strokeLinejoin="bevel" /><path d="M10 18L16.500 4" stroke="#ff7a4d" /></svg>
      </TaskApp>
      <TaskApp label="Figure 1" active><span className="bg-white"><MplLogo size={30} /></span></TaskApp>

      <div className="ml-auto flex shrink-0 items-center">
        <span className="h-[25px] w-[4px] border-x border-[#5b6c7a]" />
        <span className="ml-[10px] w-[62px] text-[16px] text-[#c9d3db]">desktop</span>
        <span className="mb-7 ml-[8px] text-[18px] leading-none">»</span>
        <Icon size={18} className="ml-[14px]"><path d="M1 14L10 5L19 14" strokeWidth="1.500" /></Icon>
        <svg width="18" height="22" viewBox="0 0 18 22" className="ml-[11px]" fill="none" stroke="#fff"><rect x="5.500" y="1" width="7" height="13" rx="2" fill="#fff" /><path d="M2.500 11V14Q2.500 17 6 17H12Q15.500 17 15.500 14V11M9 17V21M5 21H13" strokeWidth="1.300" /></svg>
        <svg width="18" height="18" viewBox="0 0 18 18" className="ml-[13px]"><path d="M0 0H11V18H0Z" fill="#2f8fd8" /><path d="M11 1H18V17H11Z" fill="#b8dcf3" /><path d="M8 9H13V18H8Z" fill="#5aaee6" /></svg>
        <svg width="20" height="20" viewBox="0 0 20 20" className="ml-[11px]" fill="#f0a3a6"><circle cx="10" cy="5" r="4.500" /><circle cx="4.800" cy="9" r="4.500" /><circle cx="15.200" cy="9" r="4.500" /><circle cx="7" cy="15" r="4.500" /><circle cx="13" cy="15" r="4.500" /><circle cx="10" cy="10.500" r="2.800" fill="#b5636a" /></svg>
        <svg width="14" height="20" viewBox="0 0 14 20" className="ml-[13px]" fill="#fff"><path d="M0 0H6.300V6.300H0ZM7.700 0H14V6.300H7.700ZM0 8H6.300V13L0 19ZM7.700 8H14V19L7.700 13Z" /></svg>
        <svg width="20" height="16" viewBox="0 0 20 16" className="ml-[13px]" fill="none" stroke="#fff" strokeWidth="1.300"><path d="M5 5.500H17.500V13.500H5Z" /><path d="M7.500 7.500H15.500V11.500H7.500Z" fill="#fff" /><path d="M19 8V11M2.500 6V11H5M.8 2V5H4.200V2M1.500 0V2M3.500 0V2" /></svg>
        <svg width="20" height="18" viewBox="0 0 20 18" className="ml-[10px]" fill="none" stroke="#fff" strokeWidth="1.200"><path d="M1 6H3.500L7 2.500V15.500L3.500 12H1ZM10 6.500Q11.500 9 10 11.500M13 4.500Q16 9 13 13.500" /><path d="M16 2Q20.500 9 16 16" stroke="#7d8b97" /></svg>
        <svg width="18" height="18" viewBox="0 0 18 18" className="ml-[13px]" fill="none" stroke="#e8eef2" strokeWidth="1.200"><path d="M10 17A7 7 0 0 1 16.500 10.500M6.500 17A10.500 10.500 0 0 1 16.500 7M3.500 17A13.500 13.500 0 0 1 16.500 4M1 16A16 16 0 0 1 16 1" /><circle cx="14.500" cy="15" r="2" fill="#fff" stroke="none" /></svg>
        <span className="ml-[11px] text-[16px]">中</span>
        <svg width="20" height="20" viewBox="0 0 20 20" className="ml-[18px]"><rect x="1" y="1" width="18" height="18" rx="3" fill="#3fa535" transform="rotate(-8 10 10)" /><path d="M15 6C12 4.500 6 4.500 6 7.500C6 10.500 14 9 14 12.500C14 15.500 8 15 5 13.500" fill="none" stroke="#fff" strokeWidth="2.800" /></svg>
        <div className="ml-[22px] w-[63px] text-[15px] leading-[23px] whitespace-nowrap">
          <div className="pr-[2px] text-right">11:05</div>
          <div>2023-08-</div>
        </div>
      </div>
    </footer>
  );
}

export default function App() {
  return (
    <div className={clsx('relative flex h-screen flex-col overflow-hidden bg-[#e1e4e5]', UI_FONT)}>
      <TitleTabs />
      <MenuBar />
      <Ribbon />
      <FormulaBar />
      <Sheet />
      <SheetTabs />
      <StatusBar />
      <Taskbar />
      <FigureWindow />
      {/* Recorder bubble */}
      <button type="button" className="absolute right-[97px] bottom-16 size-[60px] rounded-full border-[3px] border-[#e8f6ff] bg-linear-to-tr from-[#4fb4ff] to-[#2379f2] text-[15px] text-white">00:00</button>
    </div>
  );
}
